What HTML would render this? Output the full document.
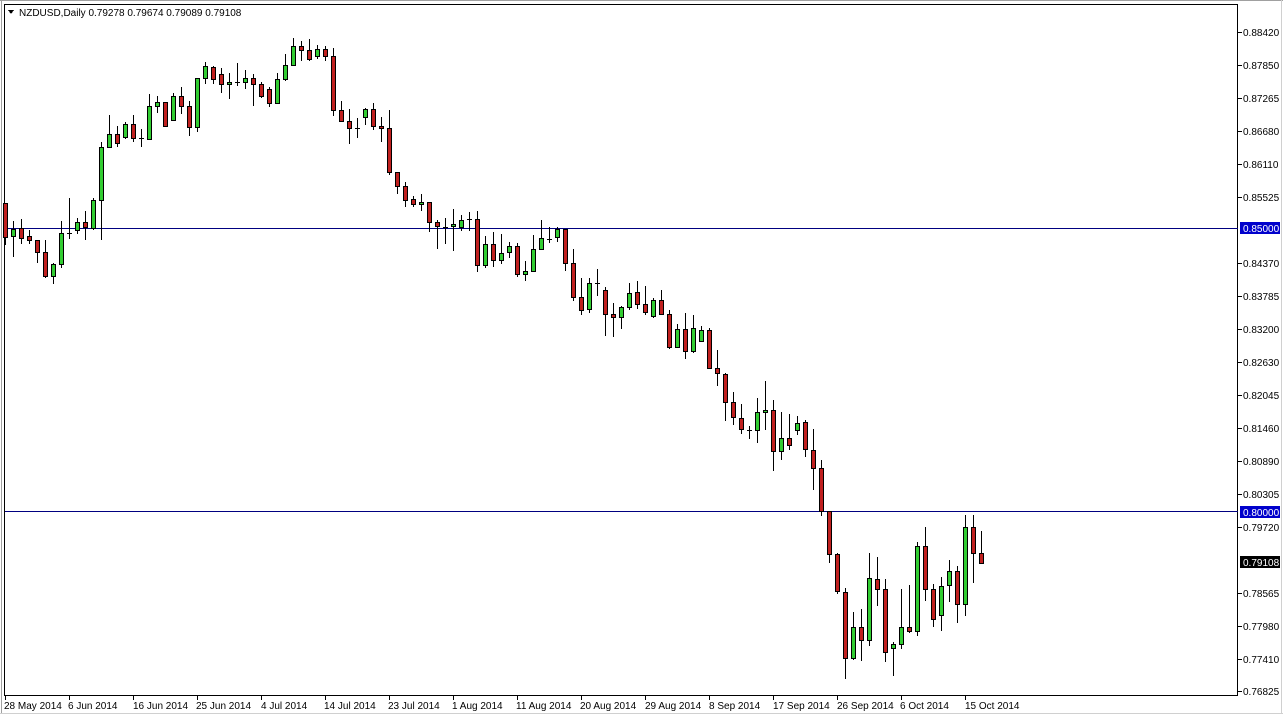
<!DOCTYPE html>
<html><head><meta charset="utf-8"><style>
html,body{margin:0;padding:0;background:#fff;}
svg{display:block;font-family:"Liberation Sans",sans-serif;font-size:10px;}
.g{fill:#32cd32;stroke:#000;}
.r{fill:#c0201f;stroke:#000;}
line{stroke:#000;}
line.h{stroke:#000080;}
</style></head><body>
<svg width="1283" height="716" viewBox="0 0 1283 716" shape-rendering="crispEdges">
<rect x="0" y="0" width="1283" height="716" fill="#fff"/>
<line x1="1.5" y1="0" x2="1.5" y2="714" style="stroke:#a0a0a0"/>
<line x1="0" y1="0.5" x2="1283" y2="0.5" style="stroke:#a0a0a0"/>
<line x1="1281.5" y1="0" x2="1281.5" y2="714" style="stroke:#d0d0d0"/>
<line x1="0" y1="713.5" x2="1283" y2="713.5" style="stroke:#d0d0d0"/>
<rect x="4.5" y="4.5" width="1233" height="691" fill="none" stroke="#000"/>
<line class="h" x1="5" y1="228.5" x2="1238" y2="228.5"/>
<line class="h" x1="5" y1="511.5" x2="1238" y2="511.5"/>
<polygon points="8,10 14,10 11,14" fill="#000"/>
<text x="19" y="16" fill="#000">NZDUSD,Daily  0.79278 0.79674 0.79089 0.79108</text>
<g id="c"></g>
<g fill="#000">
<text x="1243" y="36">0.88420</text><text x="1243" y="69">0.87850</text><text x="1243" y="102">0.87265</text>
<text x="1243" y="135">0.86680</text><text x="1243" y="168">0.86110</text><text x="1243" y="201">0.85525</text>
<text x="1243" y="267">0.84370</text><text x="1243" y="300">0.83785</text><text x="1243" y="333">0.83200</text>
<text x="1243" y="366">0.82630</text><text x="1243" y="399">0.82045</text><text x="1243" y="432">0.81460</text>
<text x="1243" y="465">0.80890</text><text x="1243" y="498">0.80305</text><text x="1243" y="531">0.79720</text>
<text x="1243" y="597">0.78565</text><text x="1243" y="630">0.77980</text><text x="1243" y="663">0.77410</text>
<text x="1243" y="695">0.76825</text>
</g>
<g style="stroke:#000">
<line x1="1238" y1="32.5" x2="1242" y2="32.5"/><line x1="1238" y1="65.5" x2="1242" y2="65.5"/><line x1="1238" y1="98.5" x2="1242" y2="98.5"/>
<line x1="1238" y1="131.5" x2="1242" y2="131.5"/><line x1="1238" y1="164.5" x2="1242" y2="164.5"/><line x1="1238" y1="197.5" x2="1242" y2="197.5"/>
<line x1="1238" y1="263.5" x2="1242" y2="263.5"/><line x1="1238" y1="296.5" x2="1242" y2="296.5"/><line x1="1238" y1="329.5" x2="1242" y2="329.5"/>
<line x1="1238" y1="362.5" x2="1242" y2="362.5"/><line x1="1238" y1="395.5" x2="1242" y2="395.5"/><line x1="1238" y1="428.5" x2="1242" y2="428.5"/>
<line x1="1238" y1="461.5" x2="1242" y2="461.5"/><line x1="1238" y1="494.5" x2="1242" y2="494.5"/><line x1="1238" y1="527.5" x2="1242" y2="527.5"/>
<line x1="1238" y1="593.5" x2="1242" y2="593.5"/><line x1="1238" y1="626.5" x2="1242" y2="626.5"/><line x1="1238" y1="659.5" x2="1242" y2="659.5"/>
<line x1="1238" y1="691.5" x2="1242" y2="691.5"/>
</g>
<rect x="1240" y="222" width="40" height="12" fill="#0000cc"/><text x="1243" y="232" fill="#fff">0.85000</text>
<rect x="1240" y="506" width="40" height="12" fill="#0000cc"/><text x="1243" y="516" fill="#fff">0.80000</text>
<rect x="1240" y="556" width="40" height="12" fill="#000"/><text x="1243" y="566" fill="#fff">0.79108</text>
<g fill="#000">
<text x="4" y="709">28 May 2014</text><text x="68" y="709">6 Jun 2014</text><text x="133" y="709">16 Jun 2014</text>
<text x="196" y="709">25 Jun 2014</text><text x="261" y="709">4 Jul 2014</text><text x="324" y="709">14 Jul 2014</text>
<text x="388" y="709">23 Jul 2014</text><text x="452" y="709">1 Aug 2014</text><text x="516" y="709">11 Aug 2014</text>
<text x="580" y="709">20 Aug 2014</text><text x="645" y="709">29 Aug 2014</text><text x="709" y="709">8 Sep 2014</text>
<text x="773" y="709">17 Sep 2014</text><text x="837" y="709">26 Sep 2014</text><text x="900" y="709">6 Oct 2014</text>
<text x="965" y="709">15 Oct 2014</text>
</g>
<g style="stroke:#000">
<line x1="5.5" y1="696" x2="5.5" y2="700"/><line x1="69.5" y1="696" x2="69.5" y2="700"/><line x1="133.5" y1="696" x2="133.5" y2="700"/>
<line x1="197.5" y1="696" x2="197.5" y2="700"/><line x1="261.5" y1="696" x2="261.5" y2="700"/><line x1="325.5" y1="696" x2="325.5" y2="700"/>
<line x1="389.5" y1="696" x2="389.5" y2="700"/><line x1="453.5" y1="696" x2="453.5" y2="700"/><line x1="517.5" y1="696" x2="517.5" y2="700"/>
<line x1="581.5" y1="696" x2="581.5" y2="700"/><line x1="645.5" y1="696" x2="645.5" y2="700"/><line x1="709.5" y1="696" x2="709.5" y2="700"/>
<line x1="773.5" y1="696" x2="773.5" y2="700"/><line x1="837.5" y1="696" x2="837.5" y2="700"/><line x1="901.5" y1="696" x2="901.5" y2="700"/>
<line x1="965.5" y1="696" x2="965.5" y2="700"/>
</g>
</svg>
<script>
var d=[
[5,'r',203,237,203,245],[13,'g',229,236,221,257],[21,'r',228,238,219,244],[29,'r',236,240,230,244],
[37,'r',240,252,240,263],[45,'r',252,276,240,278],[53,'g',264,276,263,284],[61,'g',233,264,221,268],
[69,'d',233,233,198,239],[77,'g',222,230,218,234],[85,'r',222,227,211,240],[93,'g',200,228,198,230],
[101,'g',147,200,142,240],[109,'g',134,147,115,148],[117,'r',134,143,126,147],[125,'g',124,137,122,139],
[133,'r',124,138,115,142],[141,'d',138,138,129,147],[149,'g',106,139,94,140],[157,'g',102,106,96,113],
[165,'r',102,126,102,126],[173,'g',96,120,93,121],[181,'r',96,106,87,114],[189,'r',106,127,101,136],
[197,'g',78,127,78,132],[205,'g',66,78,62,84],[213,'r',67,79,66,84],[221,'r',74,84,68,93],
[229,'g',82,84,73,99],[237,'d',82,82,63,86],[245,'g',78,82,70,89],[253,'r',78,84,74,106],
[261,'r',84,96,82,98],[269,'r',89,103,87,107],[277,'g',79,103,73,104],[285,'g',65,79,54,81],
[293,'g',46,65,38,66],[301,'r',46,50,41,61],[309,'r',50,59,39,61],[317,'g',49,56,45,59],
[325,'r',49,56,46,61],[333,'r',56,110,48,116],[341,'r',110,121,101,122],[349,'r',121,128,109,144],
[357,'d',128,128,118,138],[365,'g',109,117,108,125],[373,'r',109,126,103,130],[381,'r',126,128,117,142],
[389,'r',128,172,110,175],[397,'r',172,186,172,194],[405,'r',186,200,182,207],[413,'r',199,204,196,207],
[421,'g',202,204,194,211],[429,'r',202,222,202,232],[437,'r',222,226,220,249],[445,'d',227,227,218,244],
[453,'g',224,226,209,251],[461,'g',220,227,215,231],[469,'d',219,219,212,231],[477,'r',219,265,211,272],
[485,'g',244,265,236,268],[493,'r',244,260,232,267],[501,'g',253,260,234,264],[509,'g',246,252,242,258],
[517,'r',246,274,243,277],[525,'g',271,274,261,281],[533,'g',249,271,235,272],[541,'g',238,249,220,250],
[549,'d',239,239,227,243],[557,'g',229,237,227,242],[565,'r',229,263,229,271],[573,'r',263,297,249,301],
[581,'r',297,310,278,315],[589,'g',283,309,278,313],[597,'d',283,283,269,296],[605,'r',290,314,287,336],
[613,'r',314,317,303,337],[621,'g',307,317,306,329],[629,'g',293,307,283,310],[637,'r',292,304,281,309],
[645,'r',304,312,286,315],[653,'g',300,316,298,318],[661,'r',300,314,290,315],[669,'r',314,347,310,349],
[677,'g',329,347,324,348],[685,'r',329,351,313,359],[693,'g',328,351,315,353],[701,'g',330,341,326,342],
[709,'r',330,368,328,369],[717,'r',368,373,350,386],[725,'r',374,402,373,421],[733,'r',402,417,392,425],
[741,'r',418,429,404,434],[749,'d',430,430,426,439],[757,'g',412,430,398,443],[765,'g',410,412,381,430],
[773,'r',410,451,400,471],[781,'g',438,451,412,460],[789,'r',438,445,414,450],[797,'g',423,430,416,435],
[805,'r',422,449,420,457],[813,'r',450,468,429,490],[821,'r',468,511,460,516],[829,'r',511,554,511,563],
[837,'r',554,591,553,594],[845,'r',592,658,588,679],[853,'g',627,658,612,660],[861,'r',627,640,609,661],
[869,'g',578,640,553,646],[877,'r',579,589,557,606],[885,'r',589,652,579,662],[893,'g',644,648,642,676],
[901,'g',627,644,589,649],[909,'r',627,631,585,633],[917,'g',546,631,542,636],[925,'r',546,589,527,601],
[933,'r',589,619,584,627],[941,'g',586,615,577,631],[949,'g',571,585,560,602],[957,'r',571,604,566,623],
[965,'g',527,604,515,616],[973,'r',527,553,515,583],[981,'r',553,563,531,563]];
var s='';
d.forEach(function(c){
 var x=c[0];
 s+='<line x1="'+(x+0.5)+'" y1="'+c[4]+'" x2="'+(x+0.5)+'" y2="'+c[5]+'"/>';
 if(c[1]=='d'){s+='<line x1="'+(x-2)+'" y1="'+(c[2]+0.5)+'" x2="'+(x+3)+'" y2="'+(c[2]+0.5)+'"/>';}
 else{s+='<rect class="'+c[1]+'" x="'+(x-1.5)+'" y="'+(c[2]+0.5)+'" width="4" height="'+Math.max(1,c[3]-c[2])+'"/>';}
});
document.getElementById('c').innerHTML=s;
</script>
</body></html>
